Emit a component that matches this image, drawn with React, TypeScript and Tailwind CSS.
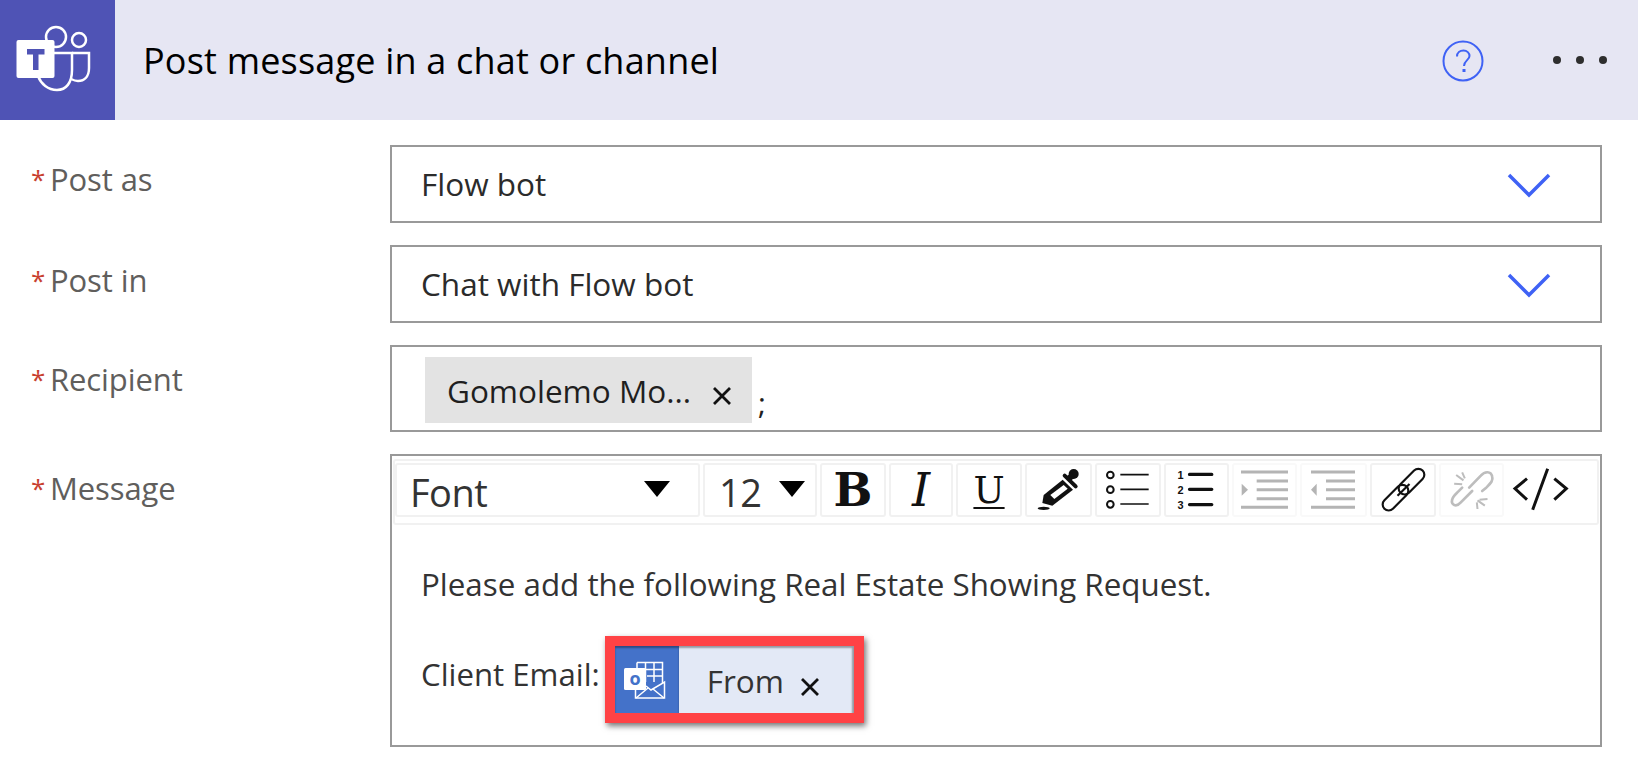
import React from "react";

const sans = "font-['Open_Sans','Noto_Sans',sans-serif]";

const Chevron: React.FC = () => (
  <svg width="44" height="26" viewBox="0 0 44 26" fill="none" stroke="#3f62f5" strokeWidth="3.5" className="mt-[4px]">
    <path d="M2 2 L22 22 L42 2" />
  </svg>
);

const TeamsIcon: React.FC = () => (
  <svg width="115" height="120" viewBox="0 0 115 120" fill="none">
    <circle cx="56" cy="37" r="10" stroke="#fff" strokeWidth="2.5" />
    <circle cx="79" cy="40" r="7" stroke="#fff" strokeWidth="2.5" />
    <path d="M51 53 H72 V70 C72 83 66 90 57 90 C48 90 41 84 38 76" stroke="#fff" strokeWidth="2.5" />
    <path d="M72 53 H89 V68 C89 77 84 81 78 81 C75 81 73 80 71 79" stroke="#fff" strokeWidth="2.5" />
    <rect x="16.5" y="40" width="38" height="38" rx="2" fill="#fff" />
    <path d="M27 49 H44.5 V54.5 H38.5 V70 H33 V54.5 H27 Z" fill="#4f53b5" />
  </svg>
);

const CloseIcon: React.FC<{ className: string }> = ({ className }) => (
  <svg width="20" height="20" viewBox="0 0 20 20" stroke="#111" strokeWidth="2.8" className={className}>
    <path d="M2 2 L18 18 M18 2 L2 18" />
  </svg>
);

const Field: React.FC<{ label: string; labelTop: string; children: React.ReactNode }> = ({ label, labelTop, children }) => (
  <div className="flex">
    <div className={`w-[390px] shrink-0 pl-[31px] flex text-[31px] leading-[40px] tracking-[-0.1px] text-[#605e5c] ${labelTop}`}>
      <span className="w-[19px] text-[26px] text-[#c8402f]">*</span>
      <span>{label}</span>
    </div>
    {children}
  </div>
);

const Select: React.FC<{ value: string }> = ({ value }) => (
  <div className="w-[1212px] h-[78px] border-2 border-[#999999] flex items-center justify-between pl-[29px] pr-[49px]">
    <span className="text-[31.5px] text-[#2b2b2b]">{value}</span>
    <Chevron />
  </div>
);

const ToolButton: React.FC<{ w: string; children?: React.ReactNode; faded?: boolean }> = ({ w, children, faded }) => (
  <div className={`${w} h-[54px] shrink-0 rounded-[3px] border-2 flex items-center justify-center ${faded ? "border-[#f9f9f9]" : "border-[#f1f1f1]"}`}>
    {children}
  </div>
);

// the toolbar drawings use a coordinate space three times the size of the button
const ToolIcon: React.FC<{ box: string; w: number; children: React.ReactNode }> = ({ box, w, children }) => (
  <svg width={w} height="54" viewBox={box} fill="none" className="shrink-0">
    {children}
  </svg>
);

const BulletList = () => (
  <ToolIcon box="824 38 198 162" w={66}>
    <g stroke="#111" strokeWidth="6">
      <circle cx="870" cy="74" r="10" />
      <circle cx="870" cy="118" r="10" />
      <circle cx="870" cy="162" r="10" />
    </g>
    <path d="M900 73 H985 M900 117 H985 M900 161 H985" stroke="#111" strokeWidth="5" />
  </ToolIcon>
);

const NumberList = () => (
  <ToolIcon box="1032 38 196 162" w={65}>
    <g fill="#111" fontSize="33" fontWeight="700" fontFamily="Liberation Sans" textAnchor="middle">
      <text x="1082" y="86">1</text>
      <text x="1082" y="130">2</text>
      <text x="1082" y="175">3</text>
    </g>
    <path d="M1109 72 H1176 M1109 117 H1176 M1109 163 H1176" stroke="#111" strokeWidth="10" strokeLinecap="round" />
  </ToolIcon>
);

const Indent = () => (
  <ToolIcon box="1236 38 195 162" w={65}>
    <path d="M1263 65 H1404 M1263 171 H1404" stroke="#b4b4b4" strokeWidth="9" />
    <path d="M1310 92 H1404 M1310 118 H1404 M1310 145 H1404" stroke="#b4b4b4" strokeWidth="9" />
    <path d="M1265 100 L1284 118 L1265 136 Z" fill="#b4b4b4" />
  </ToolIcon>
);

const Outdent = () => (
  <ToolIcon box="120 38 201 162" w={67}>
    <path d="M153 65 H285 M153 171 H285" stroke="#b4b4b4" strokeWidth="9" />
    <path d="M198 92 H285 M198 118 H285 M198 145 H285" stroke="#b4b4b4" strokeWidth="9" />
    <path d="M170 100 L153 118 L170 136 Z" fill="#b4b4b4" />
  </ToolIcon>
);

const Dropper = () => (
  <ToolIcon box="616 38 201 162" w={67}>
    <path d="M729 88 L760 118 L698 166 L668 158 L672 134 Z" fill="#111" />
    <path d="M732 104 L744 115 L704 146 L692 134 Z" fill="#fff" />
    <circle cx="762" cy="71" r="15" fill="#111" />
    <path d="M735 76 L768 108" stroke="#111" strokeWidth="12" strokeLinecap="round" />
    <path d="M748 84 L760 74" stroke="#111" strokeWidth="18" />
    <ellipse cx="672" cy="174" rx="18" ry="5" fill="#111" />
  </ToolIcon>
);

const ChainLink = () => (
  <ToolIcon box="328 38 200 162" w={67}>
    <g stroke="#111" strokeWidth="6.5">
      <rect x="-47" y="-18" width="94" height="36" rx="18" transform="translate(452 94) rotate(-45)" />
      <rect x="-47" y="-18" width="94" height="36" rx="18" transform="translate(404 142) rotate(-45)" />
      <path d="M410 136 L446 101" />
    </g>
  </ToolIcon>
);

const BrokenLink = () => (
  <ToolIcon box="535 38 197 162" w={66}>
    <g stroke="#bdbdbd" strokeWidth="8">
      <path d="M625 112 L660 76 C672 62 690 62 694 78 C698 92 688 100 676 112 L664 122" strokeLinecap="round" />
      <path d="M634 122 L600 156 C586 172 570 164 574 148 C576 138 584 132 592 124 L604 112" strokeLinecap="round" />
      <path d="M586 74 L608 90 M604 66 L612 84 M580 100 L604 102 M650 150 L672 166 M648 156 L650 176 M656 148 L680 146" strokeWidth="6" />
    </g>
  </ToolIcon>
);

const CodeIcon = () => (
  <ToolIcon box="738 38 198 162" w={66}>
    <path d="M798 85 L762 115 L798 148 M860 55 L815 178 M880 85 L916 115 L880 148" stroke="#111" strokeWidth="9" />
  </ToolIcon>
);

const Toolbar: React.FC = () => (
  <div className="mx-px mt-[3px] h-[66px] rounded-[3px] border-2 border-[#f1f1f1] flex items-start pt-[2px] gap-[3px]">
    <ToolButton w="w-[305px]">
      <div className="w-full flex items-center justify-between pl-[13px] pr-[28px]">
        <span className="text-[38px] leading-none tracking-[-0.5px] text-[#333333] mt-[4px]">Font</span>
        <span className="border-x-[13px] border-t-[16px] border-x-transparent border-t-black -mt-[2px]" />
      </div>
    </ToolButton>
    <ToolButton w="w-[114px]">
      <div className="w-full flex items-center justify-between pl-[14px] pr-[10px]">
        <span className="text-[38px] leading-none tracking-[-0.5px] text-[#333333] mt-[3px]">12</span>
        <span className="border-x-[13px] border-t-[16px] border-x-transparent border-t-black -mt-[2px]" />
      </div>
    </ToolButton>
    <ToolButton w="w-[66px]">
      <span className="font-['DejaVu_Serif',serif] font-bold text-[46px] leading-none text-[#111]">B</span>
    </ToolButton>
    <ToolButton w="w-[64px]">
      <span className="font-['DejaVu_Serif',serif] italic text-[46px] leading-none text-[#111]">I</span>
    </ToolButton>
    <ToolButton w="w-[66px]">
      <span className="font-['DejaVu_Serif',serif] text-[37px] leading-none text-[#111] underline underline-offset-[4px] decoration-2">U</span>
    </ToolButton>
    <ToolButton w="w-[67px]"><Dropper /></ToolButton>
    <ToolButton w="w-[66px]"><BulletList /></ToolButton>
    <ToolButton w="w-[65px]"><NumberList /></ToolButton>
    <ToolButton w="w-[65px]" faded><Indent /></ToolButton>
    <ToolButton w="w-[67px]" faded><Outdent /></ToolButton>
    <ToolButton w="w-[66px]"><ChainLink /></ToolButton>
    <ToolButton w="w-[65px]" faded><BrokenLink /></ToolButton>
    <div className="w-[66px] h-[54px] shrink-0 flex items-center justify-center"><CodeIcon /></div>
  </div>
);

const OutlookIcon = () => (
  <svg width="64" height="67" viewBox="0 0 64 67" fill="none">
    <path d="M22 16.5 H47.5 V37 M22 16.5 V24 M30.5 16.5 V36 M39 16.5 V36 M30 23.5 H47.5 M32 30 H47.5" stroke="#fff" strokeWidth="1.5" />
    <path d="M20.5 42 V52 H49.5 V36 L36 44 L31 40" stroke="#fff" strokeWidth="1.5" />
    <path d="M21 52 L33 42 M49 52 L38 43" stroke="#fff" strokeWidth="1.5" />
    <rect x="9" y="22" width="22" height="22" rx="1.5" fill="#fff" />
    <text x="20" y="39" textAnchor="middle" fontSize="18" fontWeight="700" fill="#4472c9" fontFamily="Open Sans">o</text>
  </svg>
);

const App: React.FC = () => (
  <div className={`w-[1638px] h-[770px] bg-white overflow-hidden ${sans}`}>
    <header className="h-[120px] bg-[#e6e6f3] flex items-center">
      <div className="w-[115px] h-[120px] bg-[#4f53b5] shrink-0"><TeamsIcon /></div>
      <h1 className="ml-[28px] flex-1 text-[36px] tracking-[0.2px] text-black pt-[2px]">Post message in a chat or channel</h1>
      <svg width="42" height="42" viewBox="0 0 42 42" fill="none" className="mr-[69px] mt-[1px]">
        <circle cx="21" cy="21" r="19.5" stroke="#3f62f5" strokeWidth="2" />
        <path d="M15 16.5 C15 12.5 18 10.5 21.5 10.5 C25 10.5 27.5 13 27.5 16 C27.5 20 22 20.5 22 26" stroke="#3f62f5" strokeWidth="2" />
        <rect x="20.5" y="29" width="3" height="3" fill="#3f62f5" />
      </svg>
      <div className="flex gap-[15px] mr-[31px]">
        <span className="w-[8px] h-[8px] rounded-full bg-[#2e2e2e]" />
        <span className="w-[8px] h-[8px] rounded-full bg-[#2e2e2e]" />
        <span className="w-[8px] h-[8px] rounded-full bg-[#2e2e2e]" />
      </div>
    </header>

    <main className="pt-[25px] flex flex-col gap-[22px]">
      <Field label="Post as" labelTop="pt-[14px]"><Select value="Flow bot" /></Field>
      <Field label="Post in" labelTop="pt-[15px]"><Select value="Chat with Flow bot" /></Field>
      <Field label="Recipient" labelTop="pt-[14px]">
        <div className="w-[1212px] h-[87px] border-2 border-[#999999] pl-[33px] flex items-end pb-[7px] gap-[6px]">
          <div className="w-[327px] h-[66px] bg-[#e3e3e3] flex items-center pl-[22px]">
            <span className="text-[31.5px] text-[#1f1f1f] mt-[2px]">Gomolemo Mo...</span>
            <CloseIcon className="ml-[21px] mt-[12px]" />
          </div>
          <span className="text-[30px] leading-[40px] text-[#1f1f1f]">;</span>
        </div>
      </Field>
      <Field label="Message" labelTop="pt-[14px]">
        <div className="w-[1212px] h-[293px] border-2 border-[#999999]">
          <Toolbar />
          <p className="mt-[39px] pl-[29px] text-[31.35px] leading-[40px] text-[#333333]">
            Please add the following Real Estate Showing Request.
          </p>
          <div className="mt-[32px] pl-[29px] flex items-start">
            <span className="text-[31.2px] leading-[40px] text-[#333333] mt-[18px]">Client Email:</span>
            <div className="ml-[5px] w-[259px] h-[87px] border-[10px] border-[#ff4245] shadow-[2px_3px_6px_rgba(0,0,0,0.55)] flex">
              <div className="w-[64px] bg-[#4472c9] shadow-[inset_0_2px_2px_rgba(0,0,0,0.35)]"><OutlookIcon /></div>
              <div className="flex-1 bg-[#e3e9f6] flex items-center pl-[28px] shadow-[inset_-2px_2px_2px_rgba(0,0,0,0.35)]">
                <span className="text-[31.5px] text-[#333333] mt-[3px]">From</span>
                <CloseIcon className="ml-[16px] mt-[15px]" />
              </div>
            </div>
          </div>
        </div>
      </Field>
    </main>
  </div>
);

export default App;
